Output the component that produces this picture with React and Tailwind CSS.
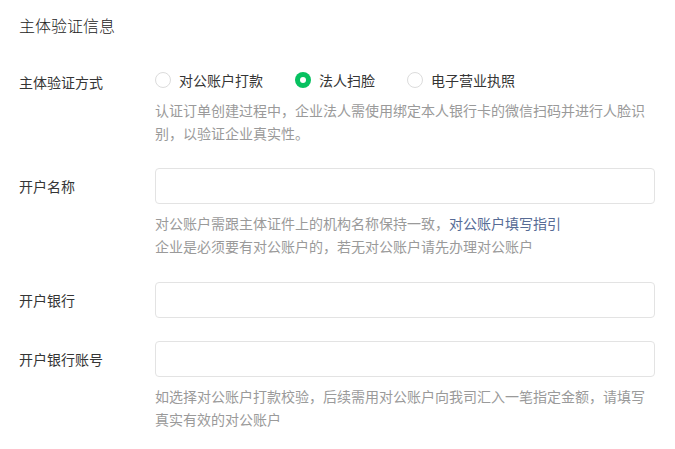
import React, { useState } from 'react';

const METHODS = [
    { id: 'transfer', label: '对公账户打款' },
    { id: 'face', label: '法人扫脸' },
    { id: 'license', label: '电子营业执照' },
];

function Radio({ checked, label, onClick }) {
    return (
        <label onClick={onClick} className="flex items-center mr-[32px] cursor-pointer">
            {checked ? (
                <span className="w-[16px] h-[16px] rounded-full bg-[#07c160] flex items-center justify-center">
                    <span className="w-[6px] h-[6px] rounded-full bg-white" />
                </span>
            ) : (
                <span className="w-[16px] h-[16px] rounded-full border border-[#dcdcdc] bg-white" />
            )}
            <span className="ml-[8px] text-[#353535]">{label}</span>
        </label>
    );
}

function Field({ label, children, hint }) {
    return (
        <div className="flex mb-[24px]">
            <div className="w-[136px] shrink-0 h-[36px] flex items-center text-[#353535]">{label}</div>
            <div className="w-[500px]">
                {children}
                {hint && <div className="mt-[8px] text-[#9a9a9a] leading-[23px]">{hint}</div>}
            </div>
        </div>
    );
}

export default function App() {
    const [method, setMethod] = useState('face');

    return (
        <div
            className="min-h-screen bg-white pl-[19px] pr-[20px] pt-[13px] text-[14px]"
            style={{ fontFamily: '"Noto Sans CJK SC", "Noto Sans", sans-serif' }}
        >
            <h2 className="text-[16px] leading-[24px] text-[#222] font-light">主体验证信息</h2>

            <div className="mt-[31px]">
                {/* 验证方式 */}
                <div className="flex mb-[23px]">
                    <div className="w-[136px] shrink-0 leading-[24px] pt-[2px] text-[#353535]">主体验证方式</div>
                    <div className="w-[500px]">
                        <div className="flex items-center h-[24px]">
                            {METHODS.map(m => (
                                <Radio key={m.id} label={m.label} checked={method === m.id} onClick={() => setMethod(m.id)} />
                            ))}
                        </div>
                        <p className="mt-[7px] text-[#9a9a9a] leading-[23px]">
                            认证订单创建过程中，企业法人需使用绑定本人银行卡的微信扫码并进行人脸识别，以验证企业真实性。
                        </p>
                    </div>
                </div>

                <Field
                    label="开户名称"
                    hint={
                        <>
                            <div>对公账户需跟主体证件上的机构名称保持一致，<span className="text-[#576b95]">对公账户填写指引</span></div>
                            <div>企业是必须要有对公账户的，若无对公账户请先办理对公账户</div>
                        </>
                    }
                >
                    <input className="block w-full h-[36px] rounded-[4px] border border-[#e3e3e3] px-3 outline-none" />
                </Field>

                <Field label="开户银行">
                    <input className="block w-full h-[36px] rounded-[4px] border border-[#e3e3e3] px-3 outline-none" />
                </Field>

                <div className="-mt-[1px]">
                    <Field
                        label="开户银行账号"
                        hint="如选择对公账户打款校验，后续需用对公账户向我司汇入一笔指定金额，请填写真实有效的对公账户"
                    >
                        <input className="block w-full h-[36px] rounded-[4px] border border-[#e3e3e3] px-3 outline-none" />
                    </Field>
                </div>
            </div>
        </div>
    );
}
